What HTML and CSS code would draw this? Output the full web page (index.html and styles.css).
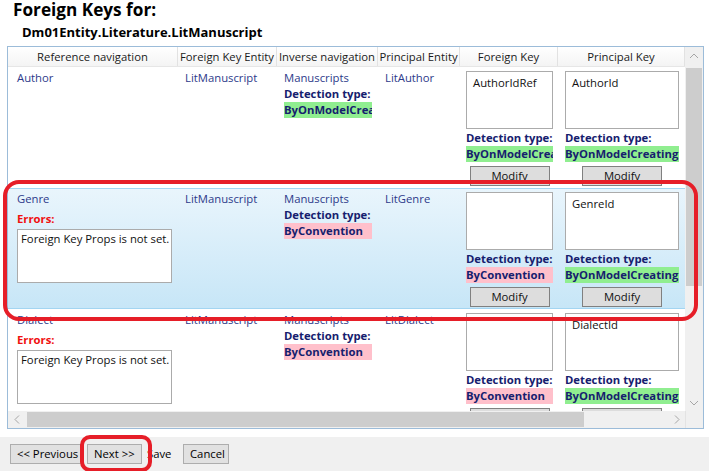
FILE: index.html
```html
<!DOCTYPE html>
<html>
<head>
<meta charset="utf-8">
<link rel="stylesheet" href="styles.css">
</head>
<body>
<div class="page">
  <div class="titles">
    <div class="t1">Foreign Keys for:</div>
    <div class="t2">Dm01Entity.Literature.LitManuscript</div>
  </div>
  <div class="grid">
    <div class="grid-body">
      <div class="viewport">
        <div class="hdr">
          <div class="hc">Reference navigation</div>
          <div class="hc">Foreign Key Entity</div>
          <div class="hc">Inverse navigation</div>
          <div class="hc">Principal Entity</div>
          <div class="hc">Foreign Key</div>
          <div class="hc">Principal Key</div>
        </div>

        <div class="row">
          <div class="c c1"><div class="txt">Author</div></div>
          <div class="c c2"><div class="txt">LitManuscript</div></div>
          <div class="c c3">
            <div class="txt">Manuscripts</div>
            <div class="dl">Detection type:</div>
            <div class="dv ok">ByOnModelCreating</div>
          </div>
          <div class="c c4"><div class="txt">LitAuthor</div></div>
          <div class="c c5">
            <div class="key">
              <div class="tb">AuthorIdRef</div>
              <div class="dl">Detection type:</div>
              <div class="dv ok">ByOnModelCreating</div>
              <button class="mod">Modify</button>
            </div>
          </div>
          <div class="c c6">
            <div class="key">
              <div class="tb">AuthorId</div>
              <div class="dl">Detection type:</div>
              <div class="dv ok">ByOnModelCreating</div>
              <button class="mod">Modify</button>
            </div>
          </div>
        </div>

        <div class="row sel">
          <div class="c c1">
            <div class="txt">Genre</div>
            <div class="err">Errors:</div>
            <div class="errbox">Foreign Key Props is not set.</div>
          </div>
          <div class="c c2"><div class="txt">LitManuscript</div></div>
          <div class="c c3">
            <div class="txt">Manuscripts</div>
            <div class="dl">Detection type:</div>
            <div class="dv conv">ByConvention</div>
          </div>
          <div class="c c4"><div class="txt">LitGenre</div></div>
          <div class="c c5">
            <div class="key">
              <div class="tb"></div>
              <div class="dl">Detection type:</div>
              <div class="dv conv">ByConvention</div>
              <button class="mod">Modify</button>
            </div>
          </div>
          <div class="c c6">
            <div class="key">
              <div class="tb">GenreId</div>
              <div class="dl">Detection type:</div>
              <div class="dv ok">ByOnModelCreating</div>
              <button class="mod">Modify</button>
            </div>
          </div>
        </div>

        <div class="row">
          <div class="c c1">
            <div class="txt">Dialect</div>
            <div class="err">Errors:</div>
            <div class="errbox">Foreign Key Props is not set.</div>
          </div>
          <div class="c c2"><div class="txt">LitManuscript</div></div>
          <div class="c c3">
            <div class="txt">Manuscripts</div>
            <div class="dl">Detection type:</div>
            <div class="dv conv">ByConvention</div>
          </div>
          <div class="c c4"><div class="txt">LitDialect</div></div>
          <div class="c c5">
            <div class="key">
              <div class="tb"></div>
              <div class="dl">Detection type:</div>
              <div class="dv conv">ByConvention</div>
              <button class="mod">Modify</button>
            </div>
          </div>
          <div class="c c6">
            <div class="key">
              <div class="tb">DialectId</div>
              <div class="dl">Detection type:</div>
              <div class="dv ok">ByOnModelCreating</div>
              <button class="mod">Modify</button>
            </div>
          </div>
        </div>
      </div>

      <div class="vscroll">
        <div class="arrow-v"><svg width="18" height="20" viewBox="0 0 18 20"><polyline points="5,11 9,7 13,11" fill="none" stroke="#a6a6a6" stroke-width="1"/></svg></div>
        <div class="vthumb"></div>
        <div class="vtrack"></div>
        <div class="arrow-v down"><svg width="18" height="17" viewBox="0 0 18 17"><polyline points="5,7 9,11 13,7" fill="none" stroke="#a6a6a6" stroke-width="1"/></svg></div>
      </div>
    </div>
    <div class="hscroll">
      <div class="hbar">
        <div class="arrow-h"><svg width="17" height="17" viewBox="0 0 17 17"><polyline points="11,4.5 7,8.5 11,12.5" fill="none" stroke="#a6a6a6" stroke-width="1"/></svg></div>
        <div class="hthumb"></div>
        <div class="htrack"></div>
        <div class="arrow-h"><svg width="17" height="17" viewBox="0 0 17 17"><polyline points="7,4.5 11,8.5 7,12.5" fill="none" stroke="#a6a6a6" stroke-width="1"/></svg></div>
      </div>
      <div class="corner"></div>
    </div>
  </div>

  <div class="foot">
    <button class="fbtn prev">&lt;&lt; Previous</button>
    <button class="fbtn next">Next &gt;&gt;</button>
    <button class="fbtn save">Save</button>
    <button class="fbtn cancel">Cancel</button>
  </div>
</div>
<div class="mark mark-row"></div>
<div class="mark mark-next"></div>
</body>
</html>
```
FILE: styles.css
```css
* { box-sizing: border-box; }

body {
  margin: 0;
  width: 709px;
  height: 471px;
  overflow: hidden;
  position: relative;
  background: #ffffff;
  font-family: "Open Sans", "Noto Sans", sans-serif;
  font-size: 11.3px;
  line-height: 16px;
  color: #000;
}

.page {
  display: flex;
  flex-direction: column;
  height: 471px;
}

.titles {
  padding-left: 13px;
}

.t1 {
  font-weight: 700;
  font-size: 17.2px;
  line-height: 20px;
  color: #000;
}

.t2 {
  font-weight: 700;
  font-size: 13px;
  line-height: 16px;
  margin: 4px 0 0 9px;
  color: #000;
}

.grid {
  margin: 6px 0 0 7px;
  width: 697px;
  border: 1px solid #9cbcd9;
  background: #fff;
}

.grid-body {
  display: flex;
  height: 364px;
}

.viewport {
  width: 677px;
  height: 364px;
  overflow: hidden;
}

.hdr {
  display: grid;
  grid-template-columns: 170px 99px 101px 82px 98px 127px;
  height: 20px;
  background: linear-gradient(#ffffff, #f4f4f4);
  border-bottom: 1px solid #e6e6e6;
}

.hc {
  text-align: center;
  padding-top: 2px;
  white-space: nowrap;
  overflow: hidden;
  border-right: 1px solid #e2e2e2;
  color: #1a1a1a;
}

.row {
  display: grid;
  grid-template-columns: 170px 99px 101px 82px 98px 127px;
  height: 121px;
  padding-top: 2px;
  border-top: 1px solid transparent;
  border-bottom: 1px solid transparent;
}

.row.sel {
  background: linear-gradient(#e9f5fc, #c7e6f7);
  border-color: #a3d5f2;
}

.c {
  overflow: hidden;
  white-space: nowrap;
}

.c1 { padding-left: 9px; }
.c2 { padding-left: 7px; }
.c3 { padding-left: 7px; }
.c4 { padding-left: 7px; }
.c5 { padding-left: 6px; }
.c6 { padding-left: 7px; }

.txt {
  color: #2d3a8a;
}

.dl {
  font-weight: 700;
  color: #16206e;
}

.dv {
  font-weight: 700;
  color: #16206e;
  overflow: hidden;
  white-space: nowrap;
}

.c3 .dl, .c3 .dv { width: 88px; }

.dv.ok { background: #90ee90; }
.dv.conv { background: #ffc0cb; }

.key {
  display: flex;
  flex-direction: column;
  align-items: center;
  padding-top: 1px;
}

.c5 .key { width: 87px; }
.c6 .key { width: 114px; }

.key .dl, .key .dv { width: 100%; }

.tb {
  width: 100%;
  height: 58px;
  border: 1px solid #ababab;
  background: #fff;
  padding: 3px 6px;
  color: #111;
  margin-bottom: 1px;
}

.mod {
  margin-top: 4px;
  width: 80px;
  height: 20px;
  padding: 0;
  border: 1px solid #808080;
  background: #dddddd;
  font-family: inherit;
  font-size: 11.3px;
  line-height: 16px;
  color: #111;
}

.err {
  font-weight: 700;
  color: #f01010;
  margin-top: 4px;
}

.errbox {
  margin-top: 2px;
  width: 155px;
  height: 54px;
  border: 1px solid #ababab;
  background: #fff;
  padding: 1px 3px;
  color: #111;
}

.vscroll {
  width: 18px;
  background: #f0f0f0;
  display: flex;
  flex-direction: column;
}

.arrow-v {
  height: 20px;
  display: flex;
}

.arrow-v.down {
  height: 17px;
}

.vthumb {
  height: 218px;
  margin: 1px 1px 0 1px;
  background: #cdcdcd;
}

.vtrack {
  flex: 1;
}

.hscroll {
  display: flex;
  height: 17px;
}

.hbar {
  width: 677px;
  background: #f0f0f0;
  display: flex;
}

.arrow-h {
  width: 17px;
  display: flex;
}

.hthumb {
  width: 557px;
  margin: 1px 0 1px 2px;
  background: #cdcdcd;
}

.htrack {
  flex: 1;
}

.corner {
  width: 18px;
  background: #f0f0f0;
  border-left: 1px solid #e3e3e3;
}

.foot {
  margin-top: auto;
  height: 34px;
  background: #f0f0f0;
  display: flex;
  align-items: flex-start;
  padding: 7px 0 0 10px;
}

.fbtn {
  height: 20px;
  padding: 0 0 0 6px;
  border: 1px solid #adadad;
  background: #e1e1e1;
  font-family: inherit;
  font-size: 11.3px;
  line-height: 16px;
  color: #000;
  text-align: left;
  white-space: nowrap;
  overflow: hidden;
}

.prev { width: 74px; }
.next { width: 55px; margin-left: 3px; }
.save {
  width: 40px;
  border-color: transparent;
  background: transparent;
  padding-left: 4px;
}
.cancel { width: 46px; margin-left: 1px; }

.mark {
  position: absolute;
  border: 4px solid #e61e28;
  pointer-events: none;
}

.mark-row {
  left: 3px;
  top: 180px;
  width: 695px;
  height: 141px;
  border-radius: 16px;
}

.mark-next {
  left: 80px;
  top: 435px;
  width: 72px;
  height: 37px;
  border-radius: 10px;
}
```
